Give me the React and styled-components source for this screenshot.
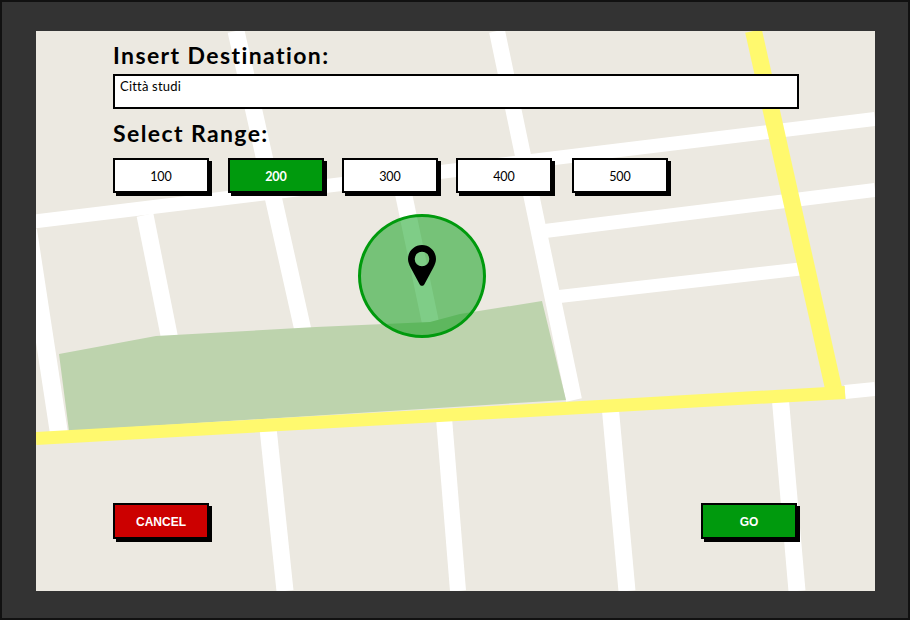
import React from 'react'
import styled, { createGlobalStyle } from 'styled-components'

const ranges = [
  { value: 100, gap: 0 },
  { value: 200, gap: 19, active: true },
  { value: 300, gap: 18 },
  { value: 400, gap: 18 },
  { value: 500, gap: 20 },
]

const whiteRoads = [
  { d: 'M30 222L875 119', w: 14 },
  { d: 'M545 231L875 190', w: 14 },
  { d: 'M555 297L800 269', w: 13 },
  { d: 'M845 392L875 389', w: 14 },
  { d: 'M497 31L574 400', w: 16 },
  { d: 'M236 31L304 335', w: 17 },
  { d: 'M400 177L432 330', w: 17 },
  { d: 'M145 215L171 345', w: 17 },
  { d: 'M28 230L60 440', w: 18 },
  { d: 'M268 428L285 591', w: 17 },
  { d: 'M444 418L458 591', w: 16 },
  { d: 'M610 405L627 591', w: 17 },
  { d: 'M780 395L797 591', w: 17 },
]

const App = () => {
  return (
    <Frame>
      <GlobalStyle />
      <MapArea>
        <MapDrawing viewBox="36 31 839 560">
          {whiteRoads.map((r) => (
            <path key={r.d} d={r.d} stroke="#fff" strokeWidth={r.w} fill="none" />
          ))}
          <polygon
            points="59,354 156,336 316,327 430,322 460,314 542,301 566,400 69,431"
            fill="#bdd3ad"
          />
          <path d="M753.5 31L835 395" stroke="#fff96e" strokeWidth="17" fill="none" />
          <path d="M36 438.5L845 392.5" stroke="#fff96e" strokeWidth="13" fill="none" />
        </MapDrawing>

        <RangeCircle>
          <svg width="28" height="41" viewBox="0 0 28 41">
            <path
              fillRule="evenodd"
              fill="#000"
              d="M14 0C6.300 0 0 6.200 0 14c0 3 1.200 5.800 2.600 8.500L11.600 39.300c1.100 2.100 3.700 2.100 4.800 0L25.400 22.500C26.800 19.800 28 17 28 14 28 6.200 21.700 0 14 0zM14 6.700a7.300 7.300 0 1 1 0 14.600A7.300 7.300 0 0 1 14 6.700z"
            />
          </svg>
        </RangeCircle>

        <Content>
          <Title>Insert Destination:</Title>
          <DestinationField>Città studi</DestinationField>
          <RangeTitle>Select Range:</RangeTitle>
          <RangeRow>
            {ranges.map((r) => (
              <RangeButton key={r.value} $gap={r.gap} $active={r.active}>
                {r.value}
              </RangeButton>
            ))}
          </RangeRow>
          <Footer>
            <ActionButton $color="#cc0000">CANCEL</ActionButton>
            <ActionButton $color="#009a0d">GO</ActionButton>
          </Footer>
        </Content>
      </MapArea>
    </Frame>
  )
}

export default App

const GlobalStyle = createGlobalStyle`
  html, body {
    margin: 0;
    padding: 0;
    background: #fff;
  }
`
const Frame = styled.div`
  box-sizing: border-box;
  width: 910px;
  height: 620px;
  border: 2px solid #111;
  background: #333333;
  padding: 29px 33px 27px 34px;
`
const MapArea = styled.div`
  position: relative;
  width: 839px;
  height: 560px;
  background: #ece9e1;
  overflow: hidden;
`
const MapDrawing = styled.svg`
  position: absolute;
  top: 0;
  left: 0;
  width: 839px;
  height: 560px;
`
const RangeCircle = styled.div`
  position: absolute;
  left: 322px;
  top: 183px;
  box-sizing: border-box;
  width: 128px;
  height: 124px;
  border: 3px solid #009a0d;
  border-radius: 50%;
  background: rgba(0, 155, 15, 0.5);
  display: flex;
  align-items: center;
  justify-content: center;
  svg {
    margin-top: -22px;
  }
`
const Content = styled.div`
  position: relative;
  box-sizing: border-box;
  height: 100%;
  display: flex;
  flex-direction: column;
  padding: 11px 76px 52px 77px;
  font-family: 'Lato', 'Liberation Sans', sans-serif;
  color: #000;
`
const Title = styled.div`
  font-size: 23px;
  font-weight: 700;
  line-height: 26px;
  letter-spacing: 1.4px;
`
const RangeTitle = styled(Title)`
  margin-top: 11px;
`
const DestinationField = styled.div`
  box-sizing: border-box;
  height: 35px;
  margin-top: 6px;
  padding: 3px 5px;
  background: #fff;
  border: 2px solid #000;
  font-size: 13px;
  line-height: 14px;
  letter-spacing: 0.2px;
`
const RangeRow = styled.div`
  display: flex;
  margin-top: 12px;
`
const RangeButton = styled.div`
  box-sizing: border-box;
  width: 96px;
  height: 35px;
  margin-left: ${(p) => p.$gap}px;
  padding-top: 1px;
  display: flex;
  align-items: center;
  justify-content: center;
  border: 2px solid #000;
  box-shadow: 3px 3px 0 #000;
  background: ${(p) => (p.$active ? '#009a0d' : '#fff')};
  color: ${(p) => (p.$active ? '#fff' : '#000')};
  font-size: 12.5px;
  font-weight: ${(p) => (p.$active ? 700 : 400)};
`
const Footer = styled.div`
  margin-top: auto;
  padding-right: 2px;
  display: flex;
  justify-content: space-between;
`
const ActionButton = styled.div`
  box-sizing: border-box;
  width: 96px;
  height: 36px;
  padding-top: 1px;
  display: flex;
  align-items: center;
  justify-content: center;
  border: 2px solid #000;
  box-shadow: 3px 3px 0 #000;
  background: ${(p) => p.$color};
  color: #fff;
  font-family: 'Liberation Sans', sans-serif;
  font-size: 12px;
  font-weight: 700;
`
